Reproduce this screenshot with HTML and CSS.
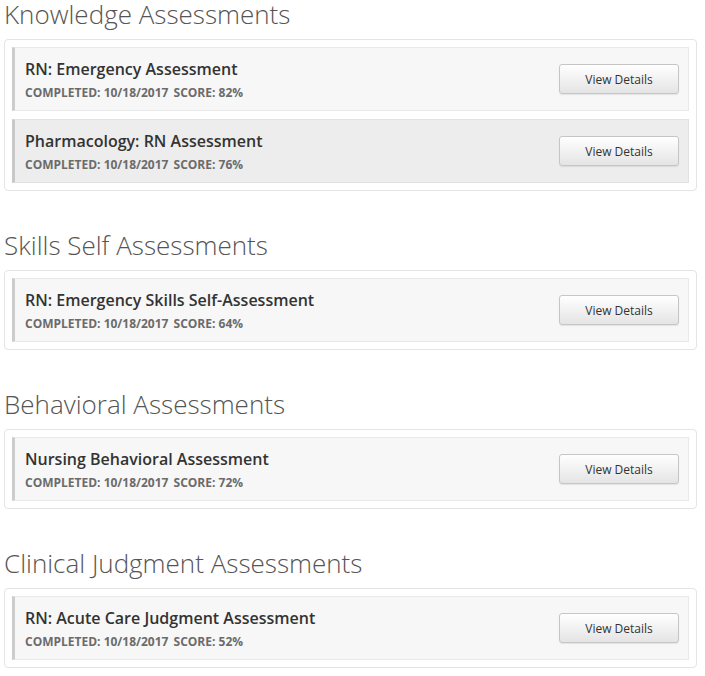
FILE: index.html
```html
<!DOCTYPE html>
<html>
<head>
<meta charset="utf-8">
<link rel="stylesheet" href="styles.css">
</head>
<body>
<div class="page">
  <section class="group">
    <h2 class="group-title">Knowledge Assessments</h2>
    <div class="panel">
      <div class="row">
        <div class="info">
          <div class="name">RN: Emergency Assessment</div>
          <div class="meta">Completed: 10/18/2017 <span class="score">Score: 82%</span></div>
        </div>
        <button class="btn">View Details</button>
      </div>
      <div class="row row-active">
        <div class="info">
          <div class="name">Pharmacology: RN Assessment</div>
          <div class="meta">Completed: 10/18/2017 <span class="score">Score: 76%</span></div>
        </div>
        <button class="btn">View Details</button>
      </div>
    </div>
  </section>
  <section class="group">
    <h2 class="group-title">Skills Self Assessments</h2>
    <div class="panel">
      <div class="row">
        <div class="info">
          <div class="name">RN: Emergency Skills Self-Assessment</div>
          <div class="meta">Completed: 10/18/2017 <span class="score">Score: 64%</span></div>
        </div>
        <button class="btn">View Details</button>
      </div>
    </div>
  </section>
  <section class="group">
    <h2 class="group-title">Behavioral Assessments</h2>
    <div class="panel">
      <div class="row">
        <div class="info">
          <div class="name">Nursing Behavioral Assessment</div>
          <div class="meta">Completed: 10/18/2017 <span class="score">Score: 72%</span></div>
        </div>
        <button class="btn">View Details</button>
      </div>
    </div>
  </section>
  <section class="group">
    <h2 class="group-title">Clinical Judgment Assessments</h2>
    <div class="panel">
      <div class="row">
        <div class="info">
          <div class="name">RN: Acute Care Judgment Assessment</div>
          <div class="meta">Completed: 10/18/2017 <span class="score">Score: 52%</span></div>
        </div>
        <button class="btn">View Details</button>
      </div>
    </div>
  </section>
</div>
</body>
</html>
```
FILE: styles.css
```css
html, body {
  margin: 0;
  padding: 0;
  background: #fff;
}
body {
  font-family: "Open Sans", "Liberation Sans", sans-serif;
  color: #333;
}
.page {
  padding: 0 8px 0 4px;
  display: flex;
  flex-direction: column;
  gap: 40px;
}
.group-title {
  margin: 0 0 11px 0;
  font-size: 26px;
  line-height: 28px;
  font-weight: 300;
  color: #555;
}
.panel {
  border: 1px solid #e4e4e4;
  border-radius: 4px;
  padding: 7px;
  display: flex;
  flex-direction: column;
  gap: 8px;
  background: #fff;
}
.row {
  height: 64px;
  box-sizing: border-box;
  display: flex;
  align-items: center;
  justify-content: space-between;
  background: #f7f7f7;
  border: 1px solid #e9e9e9;
  border-left: 3px solid #cccccc;
  padding: 0 9px 0 10px;
}
.row-active {
  background: #ededed;
  border-color: #e2e2e2;
  border-left-color: #c8c8c8;
}
.info {
  display: flex;
  flex-direction: column;
  gap: 4px;
  padding-top: 1px;
}
.name {
  font-size: 16px;
  line-height: 22px;
  font-weight: 600;
  color: #333;
}
.meta {
  font-size: 12px;
  line-height: 18px;
  font-weight: 700;
  color: #6b6b6b;
  text-transform: uppercase;
}
.score {
  margin-left: 2px;
}
.btn {
  width: 120px;
  height: 30px;
  font-family: "Open Sans", "Liberation Sans", sans-serif;
  font-size: 12px;
  color: #333;
  background: linear-gradient(#ffffff, #e4e4e4);
  border: 1px solid #c6c6c6;
  border-radius: 3px;
  box-shadow: 0 1px 1px rgba(0,0,0,0.08);
  padding: 0;
}
```
